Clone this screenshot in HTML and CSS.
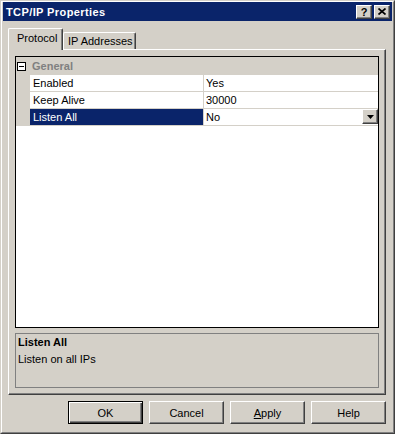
FILE: index.html
```html
<!DOCTYPE html>
<html lang="en">
<head>
  <meta charset="UTF-8" />
  <title>TCP/IP Properties</title>
  <link rel="stylesheet" href="styles.css">
</head>
<body>

  <div class="window">
    <div class="frame">

      <!-- Title bar -->
      <div class="titlebar">
        <span class="title">TCP/IP Properties</span>
        <div class="caption-buttons">
          <div class="cap-btn">?</div>
          <div class="cap-btn">
            <svg width="8" height="7" viewBox="0 0 8 7">
              <path d="M0.5 0.5 L7.5 6.5 M7.5 0.5 L0.5 6.5" stroke="#000" stroke-width="1.7" fill="none"/>
            </svg>
          </div>
        </div>
      </div>

      <!-- Tabs -->
      <div class="tabs">
        <div class="tab active">Protocol</div>
        <div class="tab">IP Addresses</div>
      </div>

      <div class="panel">
        <!-- Property grid -->
        <div class="grid">
          <div class="category">
            <span class="toggle"></span>
            <span class="cat-name">General</span>
          </div>
          <div class="row">
            <div class="gutter"></div>
            <div class="name">Enabled</div>
            <div class="value">Yes</div>
          </div>
          <div class="row">
            <div class="gutter"></div>
            <div class="name">Keep Alive</div>
            <div class="value">30000</div>
          </div>
          <div class="row selected">
            <div class="gutter"></div>
            <div class="name">Listen All</div>
            <div class="value">
              <span>No</span>
              <div class="drop-btn">
                <svg width="7" height="4" viewBox="0 0 7 4"><polygon points="0,0 7,0 3.5,4" fill="#000"/></svg>
              </div>
            </div>
          </div>
        </div>

        <!-- Description -->
        <div class="desc">
          <div class="desc-title">Listen All</div>
          <div class="desc-text">Listen on all IPs</div>
        </div>
      </div>

      <!-- Dialog buttons -->
      <div class="actions">
        <div class="btn default"><span>OK</span></div>
        <div class="btn"><span>Cancel</span></div>
        <div class="btn"><span><u>A</u>pply</span></div>
        <div class="btn"><span>Help</span></div>
      </div>

    </div>
  </div>

</body>
</html>
```

FILE: styles.css
```css
* {
  box-sizing: border-box;
}

body {
  margin: 0;
  background: #d4d0c8;
  font-family: 'Liberation Sans', Arial, sans-serif;
  font-size: 11px;
  color: #000;
}

.window {
  width: 395px;
  height: 434px;
  background: #d4d0c8;
  border: 1px solid;
  border-color: #d4d0c8 #404040 #404040 #d4d0c8;
}

.frame {
  height: 100%;
  border: 1px solid;
  border-color: #fff #808080 #808080 #fff;
  padding: 0 1px 1px 1px;
}

/* title bar */
.titlebar {
  height: 19px;
  background: #0a246a;
  display: flex;
  align-items: center;
  padding: 0 2px 0 3px;
}

.title {
  color: #fff;
  font-weight: bold;
  font-size: 11px;
  letter-spacing: 0.4px;
}

.caption-buttons {
  margin-left: auto;
  display: flex;
  gap: 2px;
}

.cap-btn {
  width: 16px;
  height: 14px;
  background: #d4d0c8;
  border: 1px solid;
  border-color: #fff #404040 #404040 #fff;
  box-shadow: inset -1px -1px #808080;
  display: flex;
  align-items: center;
  justify-content: center;
  font-weight: bold;
  font-size: 11px;
  line-height: 12px;
}

/* tabs */
.tabs {
  display: flex;
  align-items: flex-end;
  margin-top: 7px;
  padding-left: 5px;
}

.tab {
  width: 73px;
  height: 17px;
  border: 1px solid;
  border-bottom: none;
  border-color: #fff #404040 #404040 #fff;
  border-radius: 2px 2px 0 0;
  box-shadow: inset -1px 0 #808080;
  padding: 2px 0 0 4px;
  white-space: nowrap;
}

.tab.active {
  position: relative;
  z-index: 1;
  width: 55px;
  height: 22px;
  margin-bottom: -1px;
  background: #d4d0c8;
  padding: 3px 0 0 8px;
}

/* tab page */
.panel {
  width: 378px;
  height: 346px;
  margin-left: 5px;
  border: 1px solid;
  border-color: #fff #404040 #404040 #fff;
  box-shadow: inset -1px -1px #808080;
  padding: 6px 6px 0 6px;
}

.grid {
  height: 272px;
  background: #fff;
  border: 1px solid #000;
}

.category {
  height: 18px;
  background: #d4d0c8;
  display: flex;
  align-items: center;
}

.toggle {
  width: 9px;
  height: 9px;
  margin-left: 1px;
  border: 1px solid #000;
  background: #fff;
  position: relative;
}

.toggle::after {
  content: '';
  position: absolute;
  left: 1px;
  top: 3px;
  width: 5px;
  height: 1px;
  background: #000;
}

.cat-name {
  margin-left: 6px;
  font-weight: bold;
  color: #808080;
}

.row {
  display: flex;
  height: 17px;
}

.gutter {
  width: 14px;
  background: #d4d0c8;
}

.name {
  width: 174px;
  padding-left: 3px;
  line-height: 16px;
  border-right: 1px solid #d4d0c8;
  border-bottom: 1px solid #d4d0c8;
}

.value {
  flex: 1;
  padding-left: 2px;
  line-height: 16px;
  border-bottom: 1px solid #d4d0c8;
  display: flex;
}

.selected .name {
  background: #0a246a;
  color: #fff;
}

.drop-btn {
  margin-left: auto;
  width: 16px;
  height: 15px;
  background: #d4d0c8;
  border: 1px solid;
  border-color: #fff #404040 #404040 #fff;
  box-shadow: inset -1px -1px #808080;
  display: flex;
  align-items: center;
  justify-content: center;
}

/* description */
.desc {
  height: 55px;
  margin-top: 5px;
  border: 1px solid #808080;
  padding: 1px 2px;
}

.desc-title {
  font-weight: bold;
  line-height: 14px;
}

.desc-text {
  margin-top: 3px;
  line-height: 14px;
}

/* buttons */
.actions {
  display: flex;
  justify-content: flex-end;
  gap: 6px;
  margin-top: 6px;
  padding-right: 6px;
}

.btn {
  width: 75px;
  height: 23px;
  border: 1px solid;
  border-color: #fff #404040 #404040 #fff;
  box-shadow: inset -1px -1px #808080;
  display: flex;
  align-items: center;
  justify-content: center;
}

.btn.default {
  border: 1px solid #000;
  box-shadow: inset 1px 1px #fff, inset -1px -1px #404040, inset -2px -2px #808080;
}
```
